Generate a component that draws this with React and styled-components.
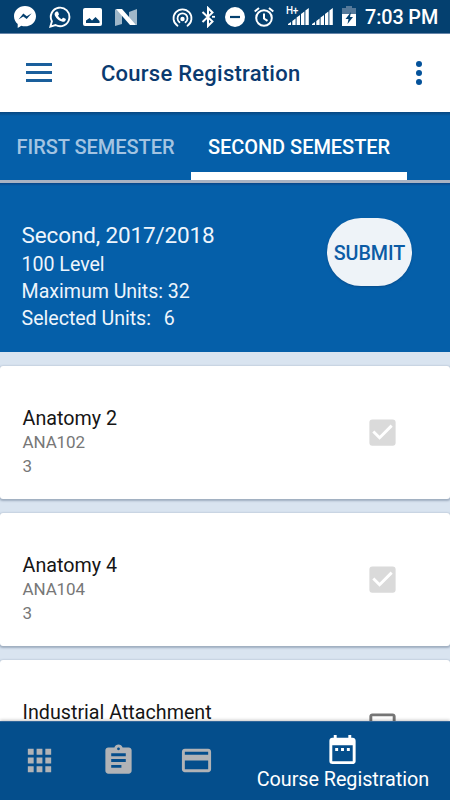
import React from "react";
import styled, { createGlobalStyle } from "styled-components";
import {
  MdApps,
  MdAssignment,
  MdCreditCard,
  MdDateRange,
  MdCheckBox,
  MdCheckBoxOutlineBlank,
} from "react-icons/md";

const GlobalStyle = createGlobalStyle`
  *, *::before, *::after { box-sizing: border-box; }
  html, body { margin: 0; padding: 0; overflow: hidden; }
  body { font-family: Roboto, "Liberation Sans", sans-serif; }
  button { font: inherit; border: 0; padding: 0; background: none; }
`;

const Screen = styled.div`
  width: 450px;
  height: 800px;
  display: flex;
  flex-direction: column;
  overflow: hidden;
  background: #d9e4f0;
`;

const StatusBar = styled.header`
  display: flex;
  align-items: flex-start;
  flex: none;
  height: 34px;
  background: #04406f;
  border-bottom: 1px solid #6685a9;
  color: #fff;
`;

const StatusIcon = styled.svg`
  display: block;
  flex: none;
  width: ${(p) => p.$w}px;
  height: ${(p) => p.$h}px;
  margin-left: ${(p) => p.$gap}px;
  margin-top: ${(p) => p.$top}px;
`;

const Clock = styled.time`
  margin-left: 9px;
  font-size: 19.8px;
  line-height: 36px;
  letter-spacing: -0.1px;
  font-weight: 500;
  white-space: nowrap;
`;

const AppBar = styled.div`
  display: flex;
  align-items: center;
  flex: none;
  height: 78px;
  padding: 0 23px 0 26px;
  background: #fff;
  color: #0a3a70;
`;

const MenuButton = styled.button`
  display: flex;
  flex-direction: column;
  gap: 5px;
  width: 26px;
  margin-top: -1px;
`;

const MenuLine = styled.span`
  height: 3px;
  background: #1a5f9c;
`;

const Title = styled.h1`
  flex: 1;
  margin: 2px 0 0 49px;
  font-size: 22px;
  line-height: 28px;
  font-weight: 500;
  letter-spacing: 0.25px;
`;

const MoreButton = styled.button`
  display: grid;
  gap: 2.6px;
  margin-right: 5px;
`;

const Dot = styled.span`
  width: 6px;
  height: 6px;
  border-radius: 50%;
  background: #04529a;
`;

const Tabs = styled.nav`
  display: flex;
  flex: none;
  height: 71px;
  background: linear-gradient(#08467f, #055fa9 4px);
  border-bottom: 3px solid #aab3c3;
`;

const Tab = styled.button`
  width: ${(p) => p.$width}px;
  padding-top: 1px;
  font-size: 20px;
  line-height: 24px;
  font-weight: 500;
  white-space: nowrap;
  letter-spacing: -0.04px;
  color: ${(p) => (p.$active ? "#fff" : "#a3c4e2")};
  border-top: 8px solid transparent;
  border-bottom: 8px solid ${(p) => (p.$active ? "#fff" : "transparent")};
`;

const Summary = styled.section`
  display: flex;
  justify-content: space-between;
  align-items: flex-start;
  flex: none;
  height: 169px;
  padding: 35px 38px 0 21.6px;
  background: linear-gradient(#09468a, #055fa9 3px);
  color: #eef5fc;
`;

const Details = styled.div`
  padding-top: 3px;
`;

const Session = styled.h2`
  margin: 0 0 2px;
  font-size: 22.5px;
  line-height: 28px;
  font-weight: 400;
  letter-spacing: -0.15px;
`;

const Detail = styled.p`
  margin: 0;
  font-size: 19.6px;
  line-height: 27px;
  letter-spacing: -0.03px;
  white-space: pre;
`;

const Value = styled.span`
  margin-left: 13px;
`;

const SubmitButton = styled.button`
  width: 85px;
  height: 68px;
  padding: 2px 0 0;
  border-radius: 34px;
  background: #eef3f8;
  color: #0b5ba5;
  font-size: 19.7px;
  font-weight: 500;
  box-shadow: 0 1px 2px #084c8c;
`;

const CourseList = styled.main`
  display: flex;
  flex-direction: column;
  gap: 14px;
  flex: 1;
  min-height: 0;
  padding-top: 14px;
  overflow: hidden;
`;

const CourseCard = styled.article`
  display: flex;
  align-items: flex-start;
  justify-content: space-between;
  flex: none;
  height: 133px;
  padding: 40px 50px 0 22.6px;
  background: #fff;
  border-radius: 3px;
  box-shadow: 0 1px 2px 1px rgba(65, 88, 115, 0.38);
`;

const CourseInfo = styled.div`
  flex: 1;
`;

const CourseName = styled.h3`
  margin: 0;
  font-size: 19.7px;
  line-height: 25px;
  font-weight: 400;
  color: #151515;
`;

const CourseMeta = styled.p`
  margin: 0;
  font-size: 17px;
  line-height: 23.5px;
  letter-spacing: -0.15px;
  color: #777;
`;

const CheckMark = styled.span`
  display: flex;
  margin-top: 9px;
  font-size: 35px;
  color: ${(p) => (p.$checked ? "#dadada" : "#757575")};
`;

const BottomNav = styled.nav`
  display: flex;
  flex: none;
  height: 79px;
  background: #044e8c;
  border-top: 1px solid #32679b;
  box-shadow: 0 -1px 3px rgba(0, 0, 0, 0.22);
  z-index: 1;
`;

const NavItem = styled.button`
  display: flex;
  flex-direction: column;
  align-items: center;
  justify-content: ${(p) => (p.$active ? "flex-start" : "center")};
  flex: none;
  width: ${(p) => (p.$active ? 213 : 78.8)}px;
  padding-top: ${(p) => (p.$active ? 10 : 0)}px;
  padding-bottom: 1px;
  color: ${(p) => (p.$active ? "#fff" : "#b1b3b6")};
  font-size: 35px;
`;

const NavLabel = styled.span`
  padding-top: 1px;
  font-size: 19.8px;
  line-height: 24px;
  letter-spacing: -0.05px;
  white-space: nowrap;
`;

const NetworkType = styled.span`
  width: 14px;
  margin: 5px -12px 0 12px;
  font-size: 10px;
  line-height: 11px;
  font-weight: 500;
  letter-spacing: -0.3px;
`;

const courses = [
  { name: "Anatomy 2", details: ["ANA102", "3"], checked: true },
  { name: "Anatomy 4", details: ["ANA104", "3"], checked: true },
  { name: "Industrial Attachment", details: [], checked: false },
];

function SignalBars({ gap }) {
  return (
    <StatusIcon viewBox="0 0 21 17" $w={21} $h={17} $gap={gap} $top={8} fill="#fff">
      <path d="M0 17v-1l3-2v3zM4.300 17v-4l3.300-2.500v6.500zM8.600 17v-7.500l3.400-2.500v10zM13 17v-11l3.400-2.500v13.500zM17.400 17v-14.500l3.400-2.500v17z" />
    </StatusIcon>
  );
}

function Status() {
  return (
    <StatusBar>
      <StatusIcon viewBox="0 0 22 22" $w={22} $h={22} $gap={14} $top={6}>
        <path fill="#fff" d="M11 0C4.800 0 0 4.500 0 10.200c0 3.100 1.400 5.900 3.700 7.700V22l3.600-2.200c1.100.4 2.400.5 3.700.5 6.200 0 11-4.500 11-10.100S17.200 0 11 0z" />
        <path d="M4.500 13.500L9.300 7.500l3.500 2.700 4.900-3L12.700 13 9.300 10.500z" fill="#04406f" />
      </StatusIcon>
      <StatusIcon viewBox="0 0 22 22" $w={22} $h={22} $gap={12.500} $top={6}>
        <path d="M1.400 20.600l1.500-5.300A9.300 9.300 0 1 1 6.500 19z" fill="none" stroke="#fff" strokeWidth="1.900" />
        <path fill="#fff" d="M7.400 5.500h1c.4 0 .5.200.7.600l.8 2c.1.300 0 .5-.1.700l-.8 1c.8 1.600 2 2.700 3.700 3.400l1-1.200c.2-.3.400-.3.700-.2l2.100 1c.3.200.4.300.3.700-.2 1.600-1.600 2.500-3.100 2.300-3.900-.7-7.400-4.100-8.100-7.200-.2-1.200.7-2.700 1.800-3.100z" />
      </StatusIcon>
      <StatusIcon viewBox="0 0 19 18" $w={19} $h={18} $gap={12.500} $top={8}>
        <path fill="#fff" d="M2 0h15a2 2 0 0 1 2 2v14a2 2 0 0 1-2 2H2a2 2 0 0 1-2-2V2a2 2 0 0 1 2-2z" />
        <path fill="#04406f" d="M3 15v-2.500l3.500-2.500L9 12.500 12.500 9l4 4v2z" />
      </StatusIcon>
      <StatusIcon viewBox="0 0 22 17" $w={22} $h={17} $gap={13} $top={8.500}>
        <path fill="#9fb7c9" d="M1 0l6 4v11l-7 2V1zM22 0v16h-1l-7-4V3z" />
        <path fill="#fff" d="M1 0h6l14 16h-6z" />
      </StatusIcon>
      <StatusIcon viewBox="0 0 21 20" $w={21} $h={20} $gap={35} $top={8}>
        <g fill="none" stroke="#fff" strokeWidth="1.800" strokeLinecap="round">
          <path d="M5.500 17.800a9 9 0 1 1 10 0" />
          <path d="M7.500 14.300a5 5 0 1 1 6 0" />
        </g>
        <circle cx="10.500" cy="11" r="2.200" fill="#fff" />
      </StatusIcon>
      <StatusIcon viewBox="0 0 14 22" $w={14} $h={22} $gap={8} $top={6}>
        <path d="M1.500 6l10 9.500L7 20V2l4.500 4.500L1.500 16" fill="none" stroke="#fff" strokeWidth="2" />
        <path d="M11 10.800h3" stroke="#fff" strokeWidth="1.800" />
      </StatusIcon>
      <StatusIcon viewBox="0 0 20 20" $w={20} $h={20} $gap={10} $top={7}>
        <circle cx="10" cy="10" r="10" fill="#fff" />
        <path d="M5 10h10" stroke="#04406f" strokeWidth="2.200" />
      </StatusIcon>
      <StatusIcon viewBox="0 0 20 20" $w={20} $h={20} $gap={9} $top={7}>
        <g fill="none" stroke="#fff" strokeWidth="2">
          <circle cx="10" cy="11" r="7.800" />
          <path d="M10 6.500V11.500l3.500 2.300M.7 4.500L5 1M19.300 4.500L15 1" />
        </g>
      </StatusIcon>
      <NetworkType>H+</NetworkType>
      <SignalBars gap={0} />
      <SignalBars gap={3} />
      <StatusIcon viewBox="0 0 14 20" $w={14} $h={20} $gap={9} $top={6}>
        <path fill="#55799a" d="M4 0h6v2h4v18H0V2h4z" />
        <path fill="#fff" d="M0 8h14v12H0z" />
        <path fill="#04406f" d="M9 6l-5.500 7H6.500l-1 5L11 11H8z" />
      </StatusIcon>
      <Clock>7:03 PM</Clock>
    </StatusBar>
  );
}

export default function App() {
  return (
    <>
      <GlobalStyle />
      <Screen>
        <Status />
        <AppBar>
          <MenuButton aria-label="Menu">
            <MenuLine />
            <MenuLine />
            <MenuLine />
          </MenuButton>
          <Title>Course Registration</Title>
          <MoreButton aria-label="More options">
            <Dot />
            <Dot />
            <Dot />
          </MoreButton>
        </AppBar>
        <Tabs>
          <Tab $width={191}>FIRST SEMESTER</Tab>
          <Tab $width={216} $active>SECOND SEMESTER</Tab>
        </Tabs>
        <Summary>
          <Details>
            <Session>Second, 2017/2018</Session>
            <Detail>100 Level</Detail>
            <Detail>Maximum Units: 32</Detail>
            <Detail>
              Selected Units:<Value>6</Value>
            </Detail>
          </Details>
          <SubmitButton>SUBMIT</SubmitButton>
        </Summary>
        <CourseList>
          {courses.map((course) => (
            <CourseCard key={course.name}>
              <CourseInfo>
                <CourseName>{course.name}</CourseName>
                {course.details.map((detail) => (
                  <CourseMeta key={detail}>{detail}</CourseMeta>
                ))}
              </CourseInfo>
              <CheckMark $checked={course.checked}>
                {course.checked ? <MdCheckBox /> : <MdCheckBoxOutlineBlank />}
              </CheckMark>
            </CourseCard>
          ))}
        </CourseList>
        <BottomNav>
          <NavItem aria-label="Home"><MdApps /></NavItem>
          <NavItem aria-label="Results"><MdAssignment /></NavItem>
          <NavItem aria-label="Payments"><MdCreditCard /></NavItem>
          <NavItem $active>
            <MdDateRange />
            <NavLabel>Course Registration</NavLabel>
          </NavItem>
        </BottomNav>
      </Screen>
    </>
  );
}
